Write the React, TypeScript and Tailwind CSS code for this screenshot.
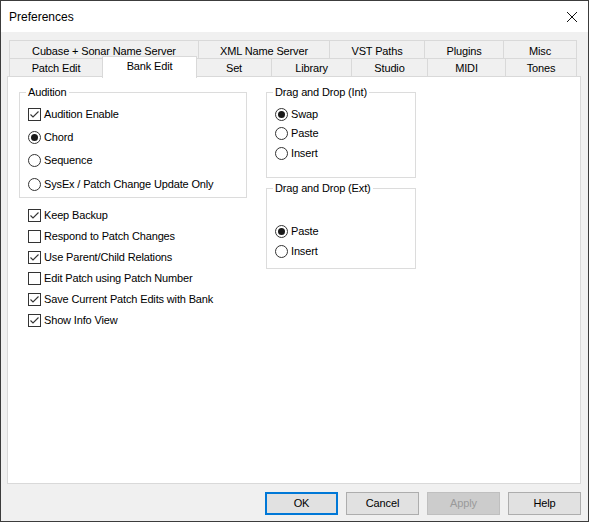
import React from 'react';

type Tab = { label: string; width: number; selected?: boolean };

const topTabs: Tab[] = [
  { label: 'Cubase + Sonar Name Server', width: 190 },
  { label: 'XML Name Server', width: 132 },
  { label: 'VST Paths', width: 96 },
  { label: 'Plugins', width: 80 },
  { label: 'Misc', width: 74 },
];

const bottomTabs: Tab[] = [
  { label: 'Patch Edit', width: 94 },
  { label: 'Bank Edit', width: 95, selected: true },
  { label: 'Set', width: 76 },
  { label: 'Library', width: 81 },
  { label: 'Studio', width: 77 },
  { label: 'MIDI', width: 79 },
  { label: 'Tones', width: 72 },
];

const Checkbox = ({ checked, label }: { checked: boolean; label: string }) => (
  <div className="flex items-center gap-[3px]">
    <span className="w-[13px] h-[13px] border border-[#333333] bg-white flex items-center justify-center shrink-0">
      {checked && (
        <svg width="11" height="11" viewBox="0 0 11 11">
          <path d="M1.5 5.5 L4 8 L9.5 2.5" fill="none" stroke="#333333" strokeWidth="1.1" />
        </svg>
      )}
    </span>
    <span>{label}</span>
  </div>
);

const Radio = ({ checked, label }: { checked: boolean; label: string }) => (
  <div className="flex items-center gap-[3px]">
    <span className="w-[13px] h-[13px] rounded-full border border-[#333333] bg-white flex items-center justify-center shrink-0">
      {checked && <span className="w-[7px] h-[7px] rounded-full bg-[#1a1a1a]" />}
    </span>
    <span>{label}</span>
  </div>
);

const GroupBox = ({
  title,
  className,
  children,
}: {
  title: string;
  className: string;
  children: React.ReactNode;
}) => (
  <div className={`relative border border-[#dcdcdc] ${className}`}>
    <span className="absolute left-[6px] top-[-8px] px-[2px] bg-white leading-[14px]">{title}</span>
    {children}
  </div>
);

const TabButton = ({ tab, row }: { tab: Tab; row: 'top' | 'bottom' }) => {
  if (tab.selected) {
    return (
      <div
        style={{ width: tab.width }}
        className="relative z-10 -ml-px -mt-[2px] h-[22px] border border-b-0 border-[#d9d9d9] bg-white flex items-center justify-center pb-[3px]"
      >
        {tab.label}
      </div>
    );
  }
  return (
    <div
      style={{ width: tab.width }}
      className={`-ml-px h-[19px] border border-[#d9d9d9] bg-[#f0f0f0] flex items-center justify-center ${
        row === 'bottom' ? 'pt-[1px]' : 'pt-[3px]'
      }`}
    >
      {tab.label}
    </div>
  );
};

const DialogButton = ({ label, focused, disabled }: { label: string; focused?: boolean; disabled?: boolean }) => (
  <button
    type="button"
    className={`w-[73px] h-[23px] flex items-center justify-center ${
      focused
        ? 'border-2 border-[#0078d7] bg-[#e1e1e1] text-black'
        : disabled
          ? 'border border-[#bfbfbf] bg-[#cccccc] text-[#9a9a9a]'
          : 'border border-[#adadad] bg-[#e1e1e1] text-black'
    }`}
  >
    {label}
  </button>
);

export default function App() {
  return (
    <div className="w-[589px] h-[522px] border border-[#3c3c3c] bg-[#f0f0f0] flex flex-col text-[11px] tracking-[-0.15px] text-black font-['Liberation_Sans',Arial,sans-serif]">
      <div className="h-[31px] bg-white flex items-center justify-between pl-[8px] pr-[10px] shrink-0">
        <span className="text-[12px] tracking-normal pt-[1px]">Preferences</span>
        <svg width="12" height="12" viewBox="0 0 12 12">
          <path d="M1 1 L11 11 M11 1 L1 11" stroke="#111111" strokeWidth="1" />
        </svg>
      </div>

      <div className="flex flex-col pl-[6px] pr-[7px] pt-[8px]">
        <div className="flex ml-[3px]">
          {topTabs.map((tab) => (
            <TabButton key={tab.label} tab={tab} row="top" />
          ))}
        </div>
        <div className="flex items-start ml-[3px] -mt-px h-[19px]">
          {bottomTabs.map((tab) => (
            <TabButton key={tab.label} tab={tab} row="bottom" />
          ))}
        </div>

        <div className="-mt-px w-[574px] h-[408px] border border-[#d9d9d9] bg-white flex pl-[11px] pt-[15px]">
          <div className="flex flex-col w-[228px]">
            <GroupBox title="Audition" className="h-[106px] pl-[8px] pt-[10px]">
              <div className="h-[23px] flex items-center">
                <Checkbox checked label="Audition Enable" />
              </div>
              <div className="h-[23px] flex items-center">
                <Radio checked label="Chord" />
              </div>
              <div className="h-[23px] flex items-center">
                <Radio checked={false} label="Sequence" />
              </div>
              <div className="h-[24px] flex items-center">
                <Radio checked={false} label="SysEx / Patch Change Update Only" />
              </div>
            </GroupBox>
            <div className="flex flex-col pl-[9px] mt-[6px]">
              <div className="h-[22px] flex items-center">
                <Checkbox checked label="Keep Backup" />
              </div>
              <div className="h-[21px] flex items-center">
                <Checkbox checked={false} label="Respond to Patch Changes" />
              </div>
              <div className="h-[21px] flex items-center">
                <Checkbox checked label="Use Parent/Child Relations" />
              </div>
              <div className="h-[21px] flex items-center">
                <Checkbox checked={false} label="Edit Patch using Patch Number" />
              </div>
              <div className="h-[21px] flex items-center">
                <Checkbox checked label="Save Current Patch Edits with Bank" />
              </div>
              <div className="h-[21px] flex items-center">
                <Checkbox checked label="Show Info View" />
              </div>
            </div>
          </div>

          <div className="flex flex-col ml-[19px] w-[150px]">
            <GroupBox title="Drag and Drop (Int)" className="h-[86px] pl-[8px] pt-[11px]">
              <div className="h-[20px] flex items-center">
                <Radio checked label="Swap" />
              </div>
              <div className="h-[19px] flex items-center">
                <Radio checked={false} label="Paste" />
              </div>
              <div className="h-[20px] flex items-center">
                <Radio checked={false} label="Insert" />
              </div>
            </GroupBox>
            <GroupBox title="Drag and Drop (Ext)" className="mt-[10px] h-[81px] pl-[8px] pt-[32px]">
              <div className="h-[20px] flex items-center">
                <Radio checked label="Paste" />
              </div>
              <div className="h-[20px] flex items-center">
                <Radio checked={false} label="Insert" />
              </div>
            </GroupBox>
          </div>
        </div>

        <div className="flex justify-end gap-[8px] mt-[8px]">
          <DialogButton label="OK" focused />
          <DialogButton label="Cancel" />
          <DialogButton label="Apply" disabled />
          <DialogButton label="Help" />
        </div>
      </div>
    </div>
  );
}
